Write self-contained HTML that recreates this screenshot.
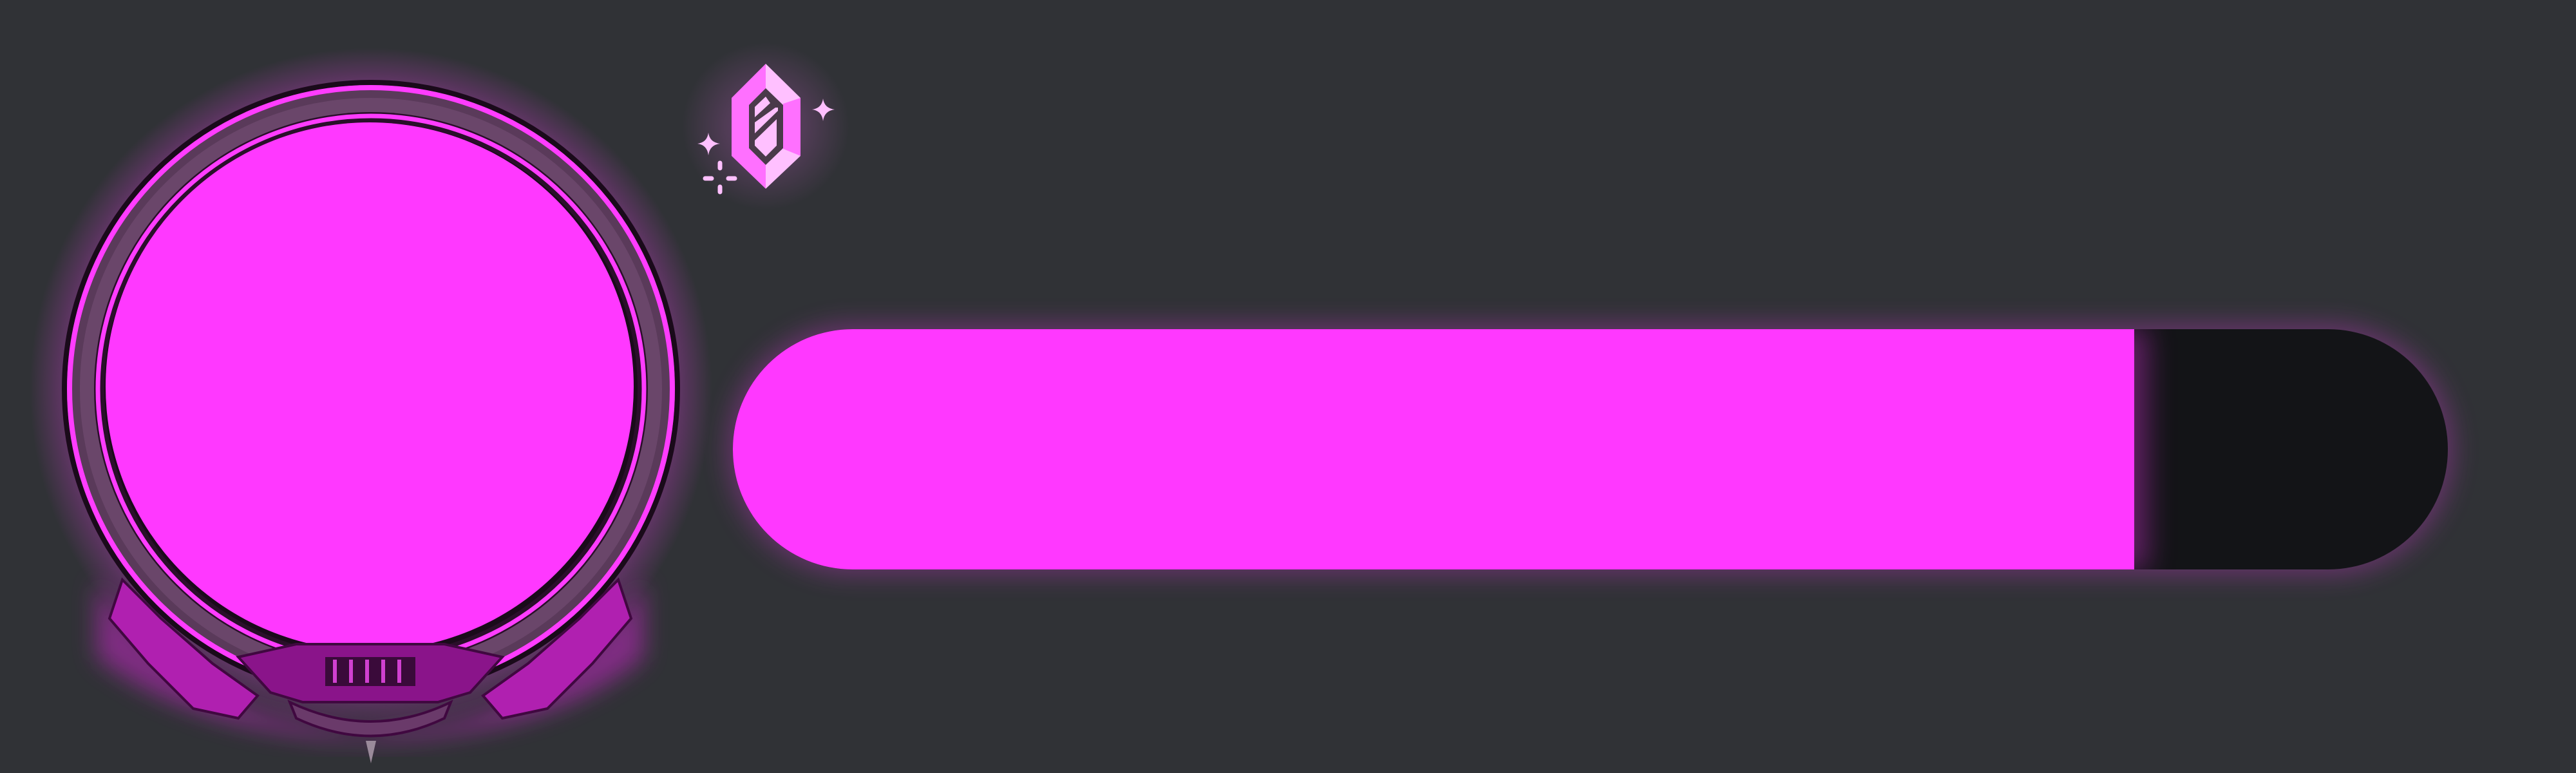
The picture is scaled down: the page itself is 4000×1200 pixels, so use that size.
<!DOCTYPE html>
<html><head><style>
html,body{margin:0;padding:0;background:#303236;width:4000px;height:1200px;overflow:hidden}
.bar{position:absolute;left:1138px;top:511px;width:2663px;height:373px;border-radius:186px;background:#131417;box-shadow:0 0 40px 8px rgba(255,60,255,0.28);overflow:hidden}
.fill{position:absolute;left:0;top:0;width:2176px;height:373px;background:#ff38ff;box-shadow:20px 0 40px rgba(255,56,255,0.35)}
svg{position:absolute;left:0;top:0}
</style></head><body>
<div class="bar"><div class="fill"></div></div>
<svg width="1400" height="1200" viewBox="0 0 1400 1200">
<defs>
<radialGradient id="gl" cx="50%" cy="50%" r="50%">
<stop offset="0.85" stop-color="#ff40ff" stop-opacity="0.35"/>
<stop offset="1" stop-color="#ff40ff" stop-opacity="0"/>
</radialGradient>
<radialGradient id="gg" cx="50%" cy="50%" r="50%">
<stop offset="0" stop-color="#ff70ff" stop-opacity="0.3"/>
<stop offset="1" stop-color="#ff70ff" stop-opacity="0"/>
</radialGradient>
<filter id="bl"><feGaussianBlur stdDeviation="18"/></filter>
</defs>
<circle cx="576" cy="604" r="530" fill="url(#gl)"/>
<g filter="url(#bl)" fill="#d028d0" opacity="0.5">
<path d="M150 900 Q260 1060 420 1110 L560 1140 L700 1120 Q880 1080 1000 900 L1000 1020 Q860 1140 580 1150 Q300 1140 150 1020Z"/>
</g>
<!-- outer ring -->
<circle cx="576" cy="604" r="476" fill="#5a3a5a" stroke="#1a0a1a" stroke-width="8"/>
<circle cx="576" cy="604" r="468" fill="none" stroke="#ff3cff" stroke-width="8"/>
<circle cx="576" cy="604" r="452" fill="#6a466a"/>
<circle cx="576" cy="604" r="430" fill="#2a0f2a"/>
<circle cx="576" cy="604" r="424" fill="none" stroke="#ff3cff" stroke-width="7"/>
<circle cx="576" cy="604" r="414" fill="#1a0a1a"/>
<circle cx="574" cy="600" r="410" fill="#ff38ff"/>
<!-- bottom ornaments -->
<g fill="#b020b0" stroke="#400840" stroke-width="4">
<path d="M190 900 L250 960 L330 1030 L400 1080 L370 1115 L300 1100 L230 1030 L170 960Z"/>
<path d="M960 900 L900 960 L820 1030 L750 1080 L780 1115 L850 1100 L920 1030 L980 960Z"/>
<path d="M370 1020 L460 1000 L690 1000 L780 1020 L730 1075 L680 1090 L470 1090 L420 1075Z" fill="#8a148a"/>
<path d="M450 1090 Q576 1150 700 1090 L690 1115 Q576 1170 460 1115Z" fill="#6a3a6a"/>
</g>
<rect x="505" y="1020" width="140" height="45" fill="#3a0a3a"/>
<g stroke="#d040d0" stroke-width="6">
<line x1="520" y1="1024" x2="520" y2="1060"/><line x1="545" y1="1024" x2="545" y2="1060"/>
<line x1="570" y1="1024" x2="570" y2="1060"/><line x1="595" y1="1024" x2="595" y2="1060"/>
<line x1="620" y1="1024" x2="620" y2="1060"/>
</g>
<path d="M568 1150 L576 1185 L584 1150Z" fill="#9a8a9a"/>
<!-- gem glow -->
<circle cx="1189" cy="196" r="130" fill="url(#gg)"/>
<path d="M1189 99 L1136 152 L1136 242 L1189 293Z" fill="#ff70ff"/>
<path d="M1189 99 L1243 152 L1243 242 L1189 293Z" fill="#ffc0ff"/>
<path d="M1216 161 L1243 152 L1243 242 L1216 231Z" fill="#ff70ff"/>
<path d="M1189 137 L1163 163 L1163 230 L1189 256 L1216 230 L1216 163Z" fill="#4a3a4a"/>
<path d="M1189 150 L1172 166 L1172 182 L1196 160Z" fill="#ffc0ff"/>
<path d="M1172 190 L1172 207 L1208 172 L1208 167 L1204 167Z" fill="#ffc0ff"/>
<path d="M1172 218 L1172 226 L1189 243 L1206 226 L1206 185Z" fill="#ffc0ff"/>
<path d="M1278 153 Q1280 168 1296 170 Q1280 172 1278 188 Q1276 172 1261 170 Q1276 168 1278 153Z" fill="#ffc0ff"/>
<path d="M1100 206 Q1102 221 1118 223 Q1102 225 1100 241 Q1098 225 1083 223 Q1098 221 1100 206Z" fill="#ffc0ff"/>
<g stroke="#ffc0ff" stroke-width="7" stroke-linecap="round">
<line x1="1118" y1="253" x2="1118" y2="261"/><line x1="1118" y1="290" x2="1118" y2="298"/>
<line x1="1095" y1="277" x2="1105" y2="277"/><line x1="1131" y1="277" x2="1141" y2="277"/>
</g>
</svg>
</body></html>
